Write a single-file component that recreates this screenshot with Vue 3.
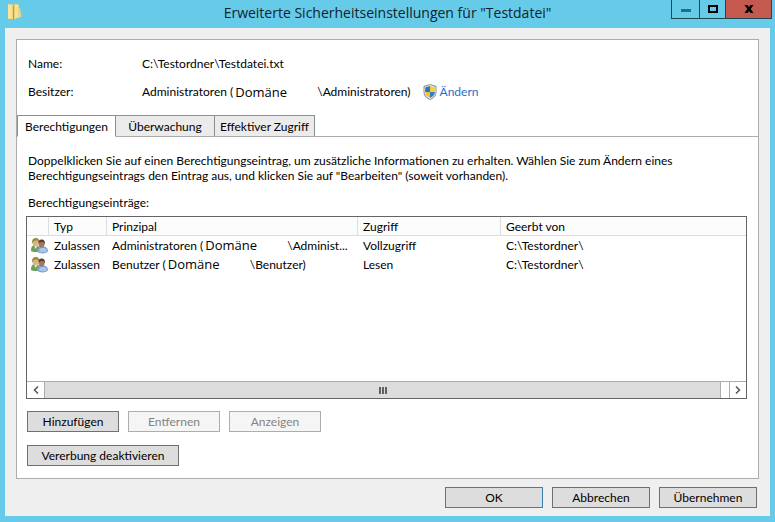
<script setup>
import { ref } from 'vue'

const tabs = ['Berechtigungen', 'Überwachung', 'Effektiver Zugriff']
const activeTab = ref(tabs[0])

const entries = [
  { type: 'Zulassen', group: 'Administratoren (', account: '\\Administ...', access: 'Vollzugriff', origin: 'C:\\Testordner\\' },
  { type: 'Zulassen', group: 'Benutzer (', account: '\\Benutzer)', access: 'Lesen', origin: 'C:\\Testordner\\' },
]
</script>

<template>
  <div class="window">
    <header class="titlebar">
      <svg class="folder" viewBox="0 0 16 18" aria-hidden="true">
        <path d="M1 1.500h11v13l-6 1.500H1z" fill="#f0d479" />
        <path d="M1 1.500h3.500v14H1z" fill="#f8e6a0" />
        <path d="M6 3l1.500-2v14L6 17z" fill="#c99a3c" />
        <path d="M7.500 1.500h3.500v13L7.500 16z" fill="#f6e197" />
        <path d="M11 5l2 .5 1.500 8.500-3.500 1z" fill="#ecd387" />
      </svg>
      <h1>Erweiterte Sicherheitseinstellungen für "Testdatei"</h1>
      <div class="controls">
        <button class="minimize" type="button" aria-label="Minimieren">
          <svg width="10" height="10" viewBox="0 0 10 10"><path d="M0 5h10v3H0z" fill="#276f86" /></svg>
        </button>
        <button class="maximize" type="button" aria-label="Maximieren">
          <svg width="10" height="10" viewBox="0 0 10 10"><path d="M1 2h8v6H1z" fill="none" stroke="#000" stroke-width="2" /></svg>
        </button>
        <button class="close" type="button" aria-label="Schließen">
          <svg width="10" height="10" viewBox="0 0 10 10"><path d="M0.500 1h3L5 3l1.500-2h3L6.700 5 9.500 9h-3L5 7 3.500 9h-3L3.300 5z" fill="#000" /></svg>
        </button>
      </div>
    </header>

    <main class="content">
      <section class="panel">
        <dl class="summary">
          <dt>Name:</dt>
          <dd>C:\Testordner\Testdatei.txt</dd>
          <dt>Besitzer:</dt>
          <dd>
            <span>Administratoren (</span><span class="domain">Domäne</span><span>\Administratoren)</span>
            <a class="change" href="#">
              <svg width="14" height="16" viewBox="0 0 14 16" aria-hidden="true">
                <path d="M7 0l6.500 2v6c0 4-3 6.500-6.500 8C3.500 14.500.5 12 .5 8V2z" fill="#8b98a1" />
                <path d="M7 1l5.500 2v5c0 3.500-2.500 5.500-5.500 7C4 13.500 1.500 11.500 1.500 8V3z" fill="#e6ebed" />
                <path d="M7 2v6H2.200V3.500z" fill="#2c75b8" />
                <path d="M7 2v6h4.800V3.500z" fill="#f5cf3c" />
                <path d="M7 8v6C4 12.500 2.200 11 2.200 8z" fill="#f2c32f" />
                <path d="M7 8v6c3-1.500 4.800-3 4.800-6z" fill="#2f7fc2" />
              </svg>
              <span>Ändern</span>
            </a>
          </dd>
        </dl>

        <div class="tabs" role="tablist">
          <button
            v-for="tab in tabs"
            :key="tab"
            type="button"
            role="tab"
            :aria-selected="tab === activeTab"
            :class="{ active: tab === activeTab }"
            @click="activeTab = tab"
          >{{ tab }}</button>
        </div>

        <div class="pane">
          <p class="hint">
            Doppelklicken Sie auf einen Berechtigungseintrag, um zusätzliche Informationen zu erhalten. Wählen Sie zum Ändern eines
            Berechtigungseintrags den Eintrag aus, und klicken Sie auf "Bearbeiten" (soweit vorhanden).
          </p>
          <p id="entries-label" class="label">Berechtigungseinträge:</p>

          <div class="list">
            <table aria-labelledby="entries-label">
              <colgroup>
                <col class="c-icon" /><col class="c-type" /><col class="c-principal" /><col class="c-access" /><col />
              </colgroup>
              <thead>
                <tr><th></th><th>Typ</th><th>Prinzipal</th><th>Zugriff</th><th>Geerbt von</th></tr>
              </thead>
              <tbody>
                <tr v-for="entry in entries" :key="entry.group">
                  <td class="icon">
                    <svg width="17" height="16" viewBox="0 0 17 16" aria-hidden="true">
                      <path d="M0 13c0-4.500 1.500-6 4.500-6S9 9 9 13c-2 1.300-7 1.300-9 0z" fill="#6f9e58" />
                      <path d="M3 7l1.500 4L7 7z" fill="#e9f2dd" />
                      <ellipse cx="4.500" cy="4.500" rx="3" ry="3.800" fill="#dfb184" />
                      <path d="M1.200 5.500C.6 1.500 2.500 0 4.800 0s4 1.500 3.400 4.500L6.500 2.500 3 3z" fill="#94903f" />
                      <path d="M6 13.500C6 10 7.500 8.500 11.500 8.500S17 10.500 17 13.500c-2.500 2.500-8.500 2.500-11 0z" fill="#7d9fce" />
                      <path d="M8 13.500c0-2 1-3.500 3-3.500h2.500c1.500.5 2.500 1.500 2.500 3.200-2 1.500-6 1.500-8 .3z" fill="#a9c6ea" />
                      <ellipse cx="10.500" cy="6" rx="3" ry="3.500" fill="#a8755a" />
                      <path d="M7.500 5.500C7 3 8.500 1.500 10.500 1.500c2.500 0 4 1.500 3.300 5L12.500 4l-3.500.3z" fill="#5b4033" />
                    </svg>
                  </td>
                  <td>{{ entry.type }}</td>
                  <td>
                    <div class="principal">
                      <span>{{ entry.group }}</span><span class="domain">Domäne</span><span>{{ entry.account }}</span>
                    </div>
                  </td>
                  <td>{{ entry.access }}</td>
                  <td>{{ entry.origin }}</td>
                </tr>
              </tbody>
            </table>
            <div class="scrollbar">
              <button type="button" aria-label="Nach links">
                <svg width="6" height="8" viewBox="0 0 6 8"><path d="M5 0.500L1.500 4 5 7.500" fill="none" stroke="#555" stroke-width="1.500" /></svg>
              </button>
              <div class="track">
                <div class="thumb"><i></i><i></i><i></i></div>
              </div>
              <button type="button" aria-label="Nach rechts">
                <svg width="6" height="8" viewBox="0 0 6 8"><path d="M1 0.500L4.500 4 1 7.500" fill="none" stroke="#555" stroke-width="1.500" /></svg>
              </button>
            </div>
          </div>

          <div class="actions">
            <button class="btn" type="button">Hinzufügen</button>
            <button class="btn" type="button" disabled>Entfernen</button>
            <button class="btn" type="button" disabled>Anzeigen</button>
          </div>
          <div class="actions">
            <button class="btn wide" type="button">Vererbung deaktivieren</button>
          </div>
        </div>
      </section>

      <footer class="footer">
        <button class="btn default" type="button">OK</button>
        <button class="btn" type="button">Abbrechen</button>
        <button class="btn" type="button">Übernehmen</button>
      </footer>
    </main>
  </div>
</template>

<style>
body {
  margin: 0;
}
</style>

<style scoped>
.window {
  box-sizing: border-box;
  display: flex;
  flex-direction: column;
  min-height: 100vh;
  padding: 0 5px 6px;
  background: #66cae9;
  color: #000;
  font: 12px/15px Lato, "Open Sans", sans-serif;
}
.window *,
.window *::before {
  box-sizing: border-box;
}
button {
  margin: 0;
  padding: 0;
  border-radius: 0;
  color: inherit;
  font: inherit;
}
.titlebar {
  display: grid;
  grid-template-columns: 104px 1fr 104px;
  height: 28px;
}
.folder {
  width: 16px;
  height: 18px;
  margin: 3px 0 0 2px;
}
h1 {
  margin: 0;
  color: #10242c;
  font-family: "Open Sans", sans-serif;
  font-size: 14px;
  font-weight: 400;
  line-height: 26px;
  text-align: center;
  white-space: nowrap;
}
.controls {
  display: flex;
  justify-content: flex-end;
  height: 19px;
  margin-right: -2px;
}
.controls button {
  display: flex;
  align-items: center;
  justify-content: center;
  width: 26px;
  border: 1px solid #1f4653;
  border-top: 0;
  border-right: 0;
  background: #66cae9;
}
.controls .minimize {
  width: 28px;
}
.controls .close {
  width: 47px;
  border-right: 1px solid #1f4653;
  background: #c3594f;
}
.content {
  display: flex;
  flex: 1;
  flex-direction: column;
  padding: 11px 11px 8px;
  background: #efefef;
}
.panel {
  display: flex;
  flex: 1;
  flex-direction: column;
  border: 1px solid #acacac;
  background: #fff;
}
.summary {
  display: grid;
  grid-template-columns: 114px 1fr;
  row-gap: 12px;
  margin: 0;
  padding: 16px 11px 15px;
}
dt,
dd {
  margin: 0;
  line-height: 16px;
}
dd {
  display: flex;
  white-space: nowrap;
}
.domain {
  width: 84px;
  flex: none;
  padding-left: 2px;
  font-family: "Open Sans", sans-serif;
  font-size: 13px;
}
.change {
  display: flex;
  gap: 3px;
  margin-left: 12px;
  color: #1f6fc8;
  text-decoration: none;
}
.tabs {
  display: flex;
  height: 22px;
  margin-bottom: -1px;
}
.tabs button {
  width: 99px;
  margin: 0;
  border: 1px solid #8c8e94;
  border-left: 0;
  background: #ebebeb;
  white-space: nowrap;
}
.tabs button:first-child {
  border-left: 1px solid #8c8e94;
}
.tabs button:last-child {
  width: 100px;
}
.tabs .active {
  z-index: 1;
  border-bottom-color: #fff;
  background: #fff;
}
.pane {
  display: flex;
  flex: 1;
  flex-direction: column;
  padding: 16px 11px 12px 9px;
  border-top: 1px solid #acacac;
}
.hint,
.label {
  margin: 0 0 0 2px;
}
.hint {
  max-width: 690px;
}
.label {
  margin-top: 12px;
}
.list {
  display: flex;
  flex: 1;
  flex-direction: column;
  justify-content: space-between;
  margin: 6px 0 12px;
  border: 1px solid #646464;
}
table {
  width: 100%;
  border-collapse: separate;
  border-spacing: 0;
  table-layout: fixed;
}
.c-icon {
  width: 22px;
}
.c-type {
  width: 58px;
}
.c-principal {
  width: 251px;
}
.c-access {
  width: 143px;
}
th,
td {
  height: 19px;
  padding: 0 5px;
  text-align: left;
  white-space: nowrap;
}
th {
  border-right: 1px solid #dedede;
  border-bottom: 1px solid #dedede;
  background: #fcfcfc;
  font-weight: 400;
}
th:last-child {
  border-right: 0;
}
.icon {
  padding: 0 0 0 4px;
}
.icon svg {
  display: block;
}
.principal {
  display: flex;
}
.scrollbar {
  display: flex;
  height: 17px;
}
.scrollbar button {
  display: flex;
  align-items: center;
  justify-content: center;
  width: 17px;
  border: 1px solid #acacac;
  border-width: 1px 0 0;
  background: #fff;
}
.scrollbar button:last-child {
  border-left-width: 1px;
}
.track {
  flex: 1;
  padding-right: 8px;
  border-top: 1px solid #acacac;
}
.thumb {
  display: flex;
  align-items: center;
  justify-content: center;
  gap: 1px;
  height: 16px;
  border: 1px solid #acacac;
  border-width: 0 1px;
  background: #dcdcdc;
}
.thumb i {
  width: 2px;
  height: 7px;
  background: #606060;
}
.actions {
  display: flex;
  gap: 9px;
  padding-left: 1px;
}
.actions + .actions {
  margin-top: 13px;
}
.btn {
  width: 92px;
  height: 21px;
  border: 1px solid #707070;
  background: #dddddd;
  white-space: nowrap;
}
.btn:disabled {
  border-color: #adadad;
  background: #f5f5f5;
  color: #838383;
}
.btn.wide {
  width: 152px;
}
.footer {
  display: flex;
  justify-content: flex-end;
  gap: 9px;
  margin: 8px 2px 0 0;
}
.footer .btn {
  width: 98px;
}
.btn.default {
  border-color: #3c7fb1;
  background: #dddddd;
}
</style>
